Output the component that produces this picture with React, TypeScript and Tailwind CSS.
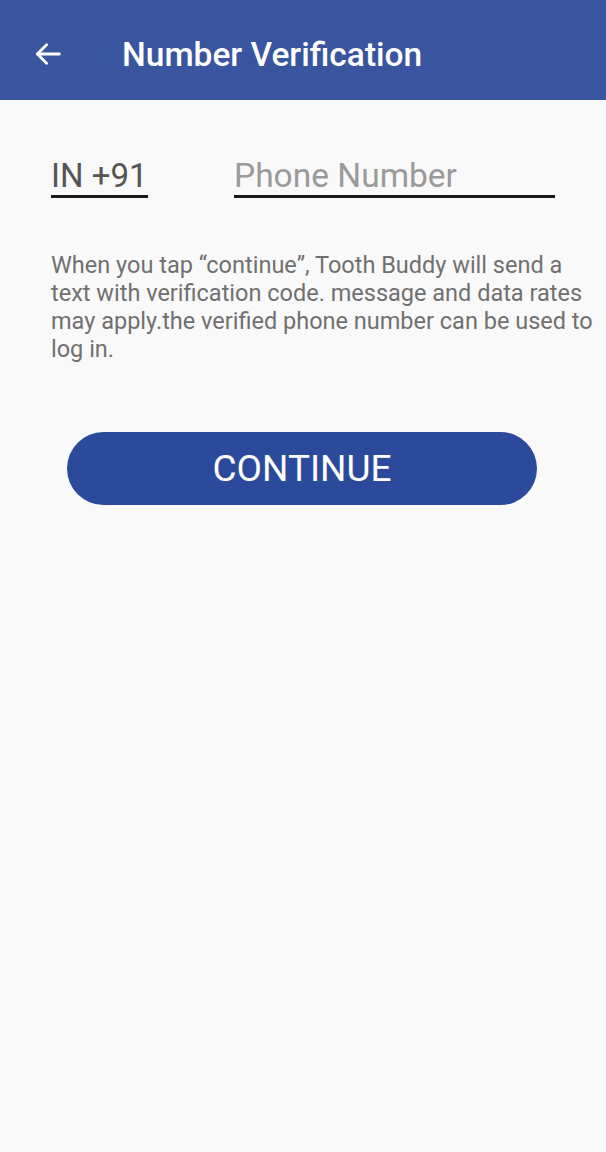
export default function App() {
  return (
    <div className="min-h-[1152px] bg-[#f9f9f9] font-['Roboto',sans-serif]">
      {/* Top bar */}
      <header className="flex h-[100px] items-center bg-[#3a55a0] pl-[31px]">
        <svg width="34" height="34" viewBox="0 0 24 24" fill="none" stroke="white" strokeWidth="2" strokeLinecap="round" strokeLinejoin="round" className="mt-[8px]">
          <path d="M20 12H4.5" />
          <path d="M11 5.5L4.5 12L11 18.5" />
        </svg>
        <h1 className="ml-[57px] mt-[10px] text-[33.5px] font-medium text-white">Number Verification</h1>
      </header>

      {/* Phone input */}
      <div className="flex items-end px-[51px] pt-[57px]">
        <div className="w-[97px] shrink-0 whitespace-nowrap border-b-[3px] border-[#1a1a1a] text-[33px] leading-[38px] text-[#555]">
          IN +91
        </div>
        <div className="ml-[86px] w-[321px] shrink-0 whitespace-nowrap border-b-[3px] border-[#1a1a1a] text-[33.5px] leading-[38px] text-[#9a9a9a]">
          Phone Number
        </div>
      </div>

      <p className="mt-[53px] pl-[51px] pr-[8px] text-[23.5px] leading-[28px] text-[#707070]">
        When you tap “continue”, Tooth Buddy will send a text with verification code. message and data rates may apply.the verified phone number can be used to log in.
      </p>

      <div className="mt-[69px] flex justify-center pr-[2px]">
        <button className="h-[73px] w-[470px] rounded-full bg-[#2c4a9b] text-[37px] text-white">
          CONTINUE
        </button>
      </div>
    </div>
  );
}
